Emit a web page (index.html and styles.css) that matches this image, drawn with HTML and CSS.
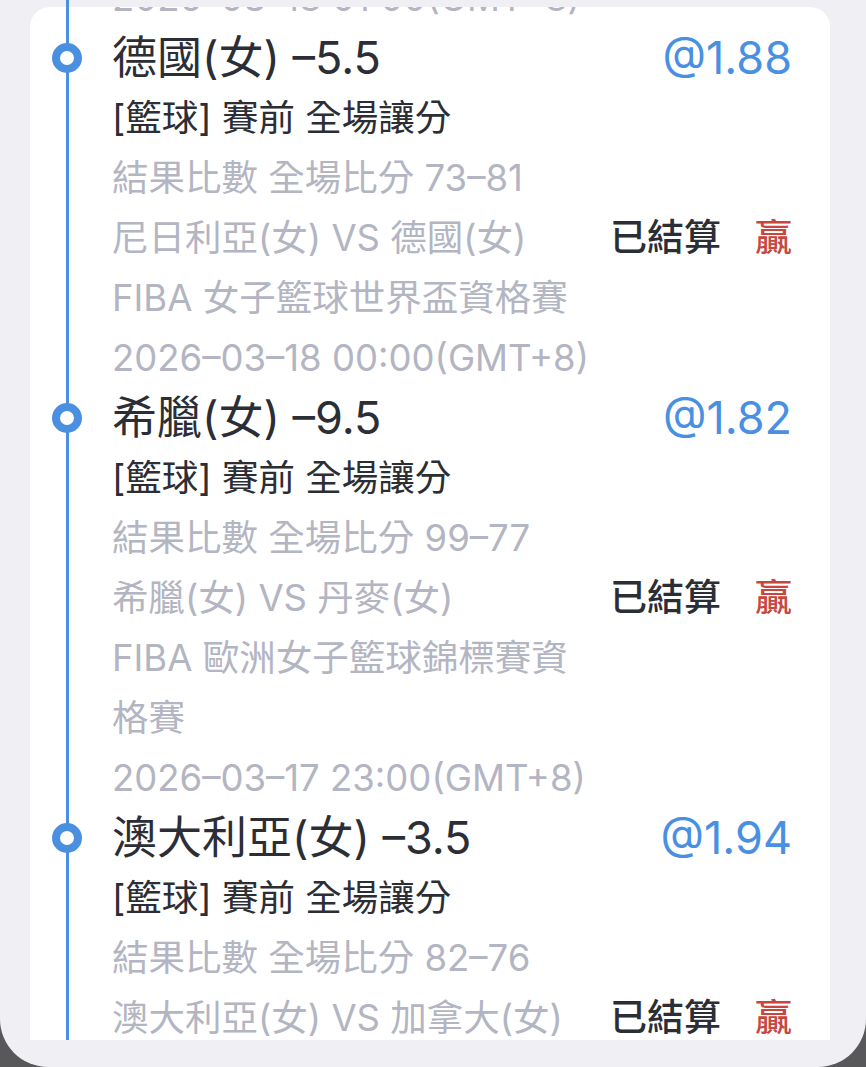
FILE: index.html
```html
<!DOCTYPE html>
<html lang="zh-Hant">
<head>
<meta charset="utf-8">
<link rel="stylesheet" href="styles.css">
</head>
<body>
<div class="screen">
  <div class="rail"></div>
  <div class="card">
    <div class="list">
      <div class="row gray lead">2026–03–18 01:00(GMT+8)</div>

      <div class="entry">
        <div class="title-row"><span class="dot"></span><span class="title">德國(女) –5.5</span><span class="odds">@1.88</span></div>
        <div class="row dark">[籃球] 賽前 全場讓分</div>
        <div class="row gray">結果比數 全場比分 73–81</div>
        <div class="row match"><span class="gray teams">尼日利亞(女) VS 德國(女)</span><span class="status">已結算</span><span class="result">贏</span></div>
        <div class="row gray league">FIBA 女子籃球世界盃資格賽</div>
        <div class="row gray">2026–03–18 00:00(GMT+8)</div>
      </div>

      <div class="entry">
        <div class="title-row"><span class="dot"></span><span class="title">希臘(女) –9.5</span><span class="odds">@1.82</span></div>
        <div class="row dark">[籃球] 賽前 全場讓分</div>
        <div class="row gray">結果比數 全場比分 99–77</div>
        <div class="row match"><span class="gray teams">希臘(女) VS 丹麥(女)</span><span class="status">已結算</span><span class="result">贏</span></div>
        <div class="row gray league">FIBA 歐洲女子籃球錦標賽資格賽</div>
        <div class="row gray">2026–03–17 23:00(GMT+8)</div>
      </div>

      <div class="entry">
        <div class="title-row"><span class="dot"></span><span class="title">澳大利亞(女) –3.5</span><span class="odds">@1.94</span></div>
        <div class="row dark">[籃球] 賽前 全場讓分</div>
        <div class="row gray">結果比數 全場比分 82–76</div>
        <div class="row match"><span class="gray teams">澳大利亞(女) VS 加拿大(女)</span><span class="status">已結算</span><span class="result">贏</span></div>
        <div class="row gray league">FIBA 女子籃球世界盃資格賽</div>
        <div class="row gray">2026–03–17 20:00(GMT+8)</div>
      </div>
    </div>
  </div>
</div>
</body>
</html>
```

FILE: styles.css
```css
html, body {
  margin: 0;
  padding: 0;
  background: #58585a;
}

body {
  width: 866px;
  height: 1067px;
  overflow: hidden;
  font-family: "Inter", "Noto Sans CJK TC", sans-serif;
}

.screen {
  position: relative;
  width: 866px;
  height: 1067px;
  background: #efeff4;
  border-radius: 0 0 48px 48px;
  overflow: hidden;
  padding-top: 7px;
  box-sizing: border-box;
}

.rail {
  position: absolute;
  left: 66px;
  top: 0;
  width: 3px;
  height: 1040px;
  background: #4a8fe0;
  z-index: 1;
}

.card {
  margin: 0 36px 0 30px;
  height: 1033px;
  background: #ffffff;
  border-radius: 20px 20px 0 0;
  overflow: hidden;
}

.list {
  margin-top: -39px;
  padding: 0 38px 0 82px;
}

.row {
  height: 60px;
  line-height: 60px;
  font-size: 36.5px;
  white-space: nowrap;
}

.gray { color: #b3b5c2; }
.dark { color: #2c2e36; }

.league {
  height: auto;
  white-space: normal;
  max-width: 480px;
}

.title-row {
  position: relative;
  display: flex;
  align-items: center;
  height: 60px;
  font-size: 45px;
  line-height: 60px;
}

.dot {
  position: absolute;
  left: -60px;
  top: 15px;
  width: 30px;
  height: 30px;
  box-sizing: border-box;
  border: 8px solid #4a8fe0;
  border-radius: 50%;
  background: #ffffff;
  z-index: 2;
}

.title {
  flex: 1;
  color: #2c2e36;
}

.odds {
  color: #4a90e2;
}

.match {
  display: flex;
  align-items: center;
}

.teams {
  width: 498px;
  overflow: hidden;
}

.status {
  color: #2c2e36;
  font-size: 37px;
  font-weight: 500;
}

.result {
  margin-left: auto;
  color: #c8463e;
  font-size: 37px;
  font-weight: 500;
}
```
